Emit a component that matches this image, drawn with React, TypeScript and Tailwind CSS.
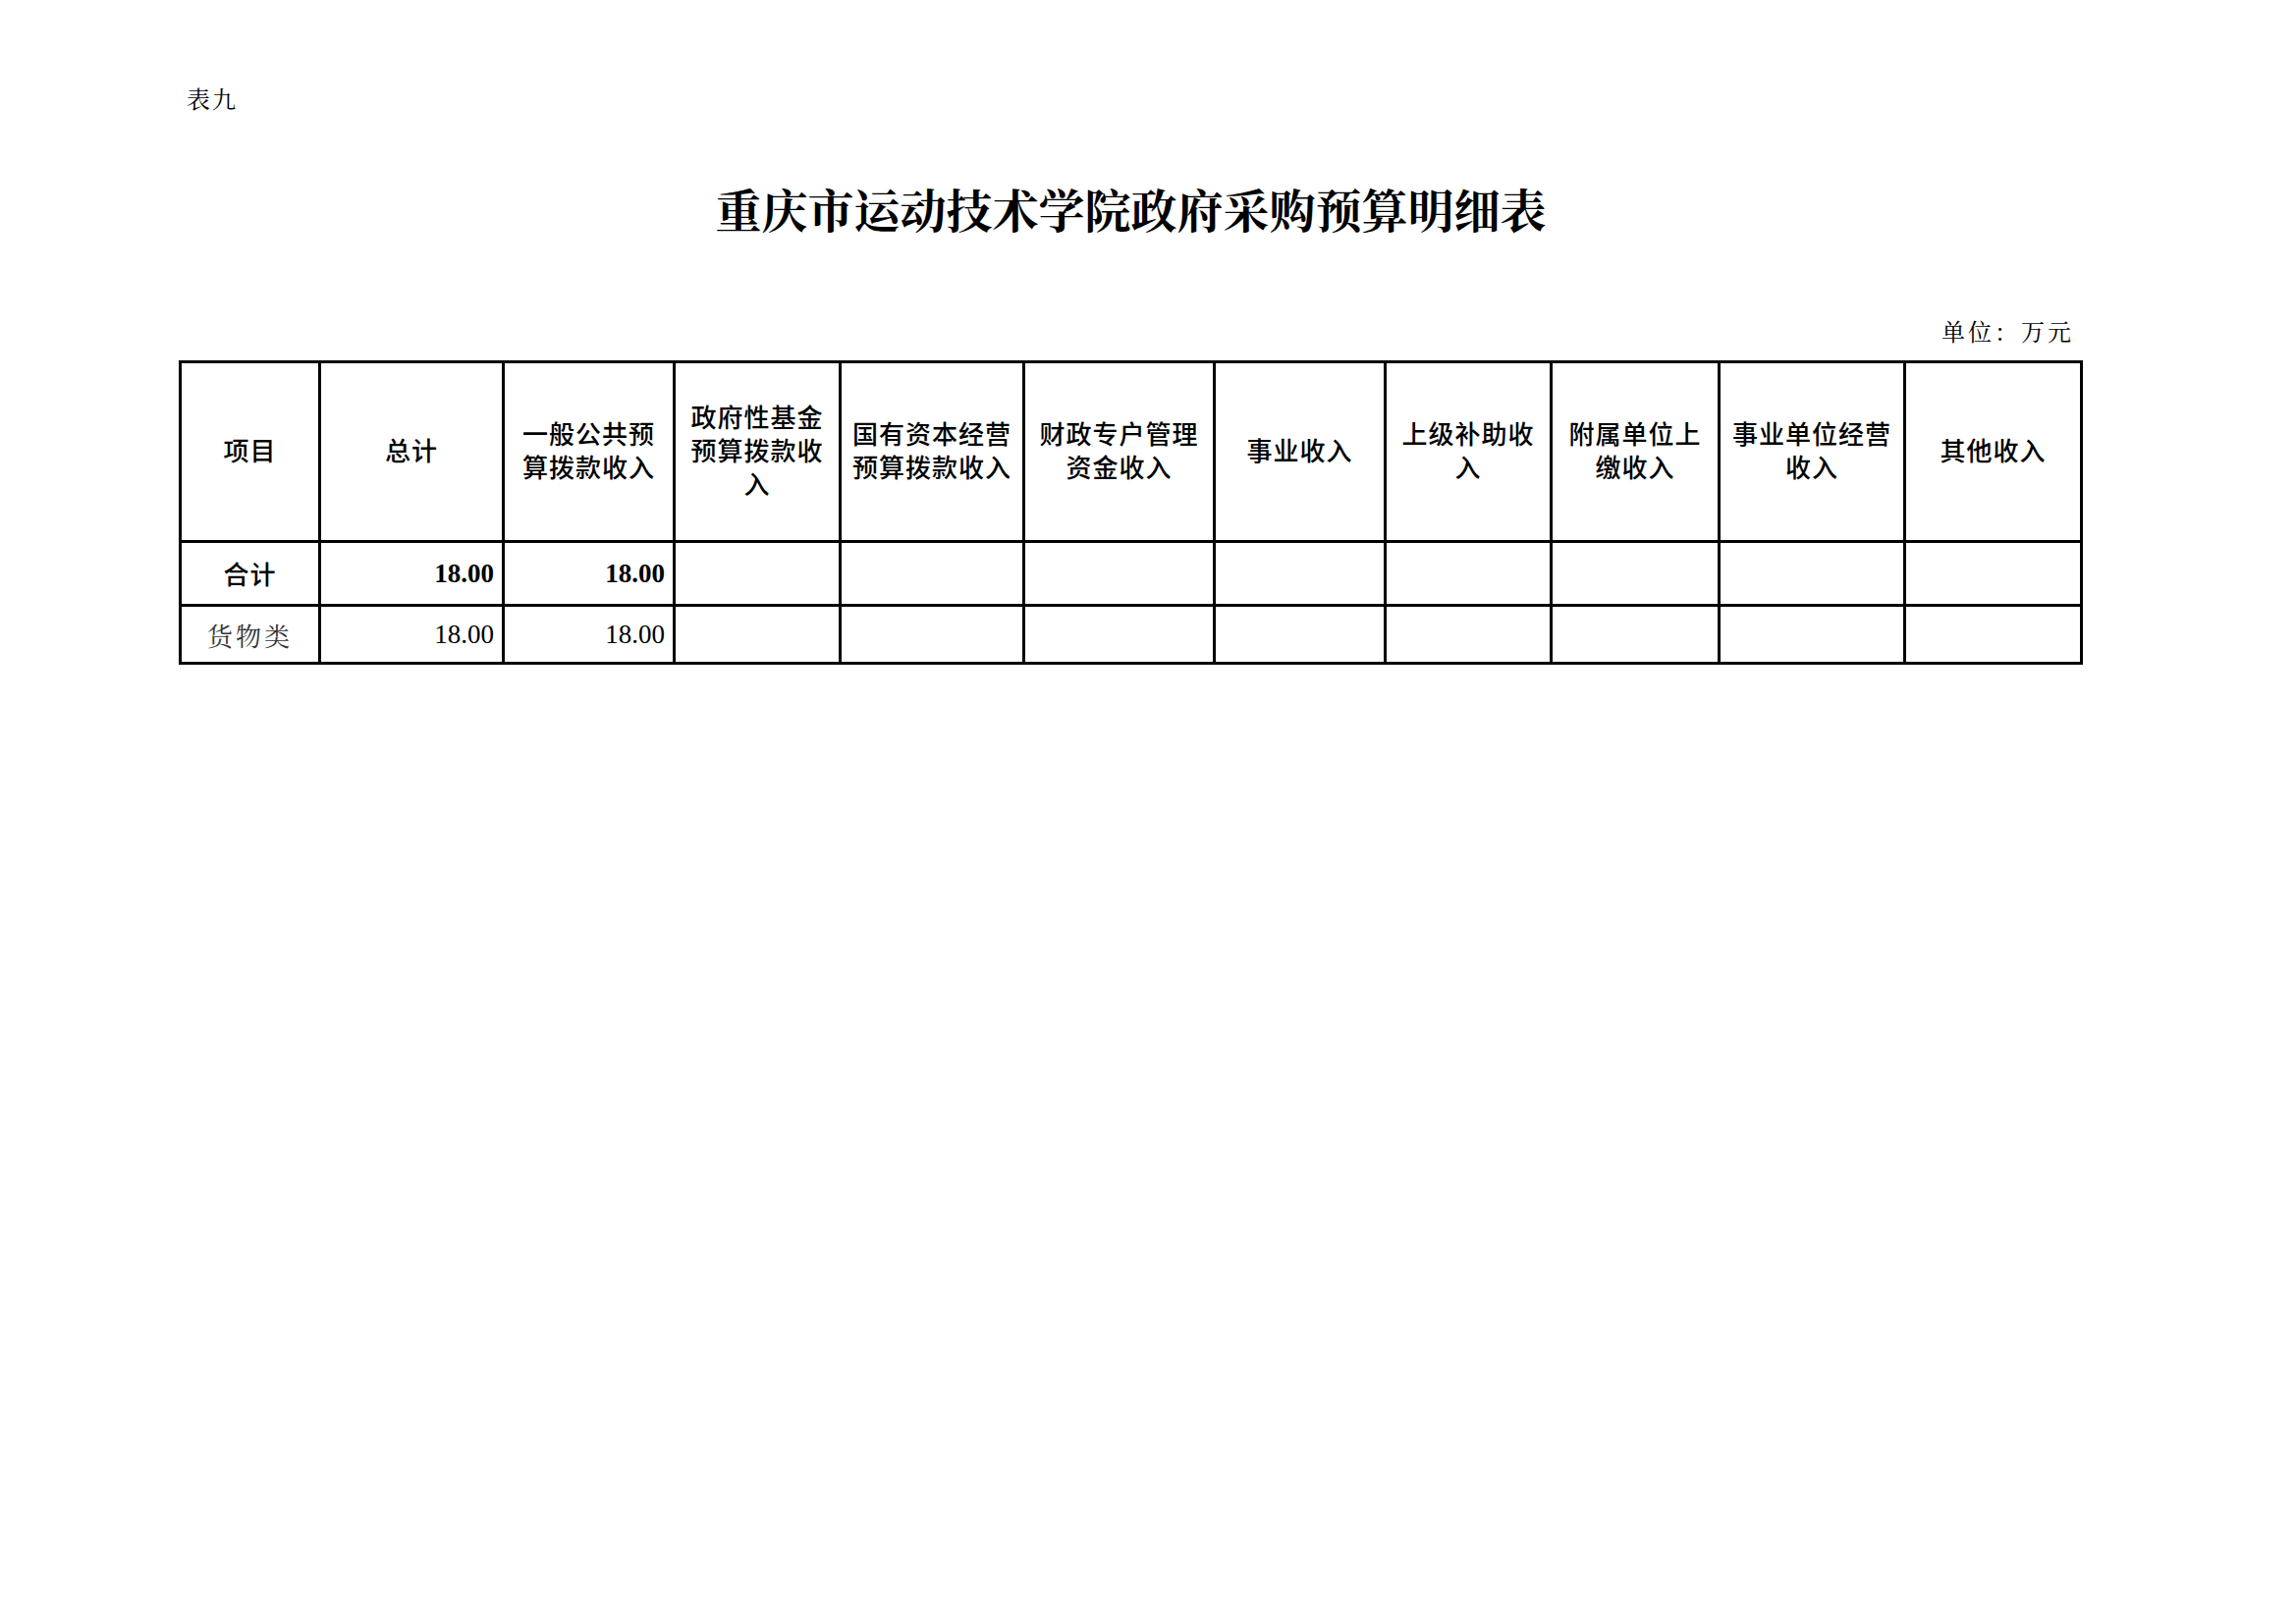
import React from "react";

const cols = [142, 187, 174, 169, 187, 194, 174, 169, 171, 189, 180];

const headers: string[][] = [
  ["项目"],
  ["总计"],
  ["一般公共预", "算拨款收入"],
  ["政府性基金", "预算拨款收", "入"],
  ["国有资本经营", "预算拨款收入"],
  ["财政专户管理", "资金收入"],
  ["事业收入"],
  ["上级补助收", "入"],
  ["附属单位上", "缴收入"],
  ["事业单位经营", "收入"],
  ["其他收入"],
];

const serifCjk = {
  fontFamily: '"Noto Serif CJK SC", "Noto Sans CJK SC", serif',
};

export default function App() {
  const gridCols = cols.map((c) => `${c}px`).join(" ");
  return (
    <div className="w-[2338px] h-[1653px] bg-white text-black">
      <div className="ml-[182px] w-[1939px] pt-[84px]">
        <div className="pl-[8px] text-[24px] leading-[32px] tracking-[2px] font-['Noto_Serif_CJK_SC','Noto_Sans_CJK_SC',serif]">
          表九
        </div>
        <div className="mt-[66px] text-center text-[47px] leading-[60px] font-bold font-['Noto_Serif_CJK_SC','Noto_Sans_CJK_SC',serif]">
          重庆市运动技术学院政府采购预算明细表
        </div>
        <div className="mt-[79px] pr-[9px] text-right text-[24px] leading-[32px] tracking-[3px] font-['Noto_Serif_CJK_SC','Noto_Sans_CJK_SC',serif]">
          单位：万元
        </div>
        <div
          className="mt-[14px] grid border-l-[3px] border-t-[3px] border-black"
          style={{ gridTemplateColumns: gridCols, gridTemplateRows: "183px 65px 59px" }}
        >
          {headers.map((lines, i) => (
            <div
              key={`h${i}`}
              className="flex flex-col items-center justify-center pb-[5px] border-r-[3px] border-b-[3px] border-black text-center text-[26px] leading-[34px] tracking-[1px] font-medium font-['Noto_Sans_CJK_SC',sans-serif]"
            >
              {lines.map((l, j) => (
                <div key={j}>{l}</div>
              ))}
            </div>
          ))}
          {cols.map((_, i) => (
            <div
              key={`r1${i}`}
              className={
                i === 0
                  ? "flex items-center justify-center pb-[2px] border-r-[3px] border-b-[3px] border-black text-[26px] tracking-[1px] font-medium font-['Noto_Sans_CJK_SC',sans-serif]"
                  : "flex items-center justify-end pr-[8px] border-r-[3px] border-b-[3px] border-black text-[27px] font-bold font-['Liberation_Serif',serif]"
              }
            >
              {i === 0 ? "合计" : i === 1 || i === 2 ? "18.00" : ""}
            </div>
          ))}
          {cols.map((_, i) => (
            <div
              key={`r2${i}`}
              className={
                i === 0
                  ? "flex items-center justify-center border-r-[3px] border-b-[3px] border-black text-[26px] tracking-[3px] text-[#333333]"
                  : "flex items-center justify-end pr-[8px] border-r-[3px] border-b-[3px] border-black text-[27px] font-['Liberation_Serif',serif]"
              }
              style={i === 0 ? serifCjk : undefined}
            >
              {i === 0 ? "货物类" : i === 1 || i === 2 ? "18.00" : ""}
            </div>
          ))}
        </div>
      </div>
    </div>
  );
}
